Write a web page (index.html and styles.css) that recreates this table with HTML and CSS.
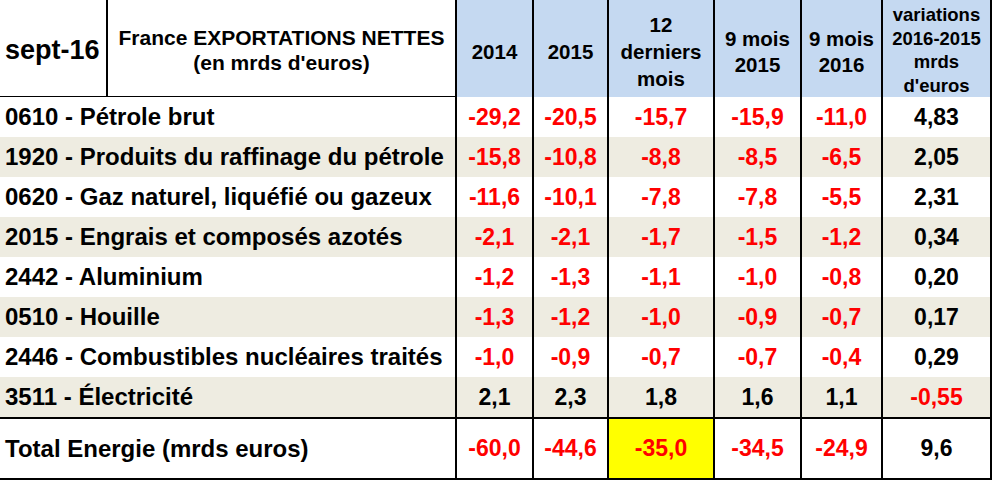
FILE: index.html
```html
<!DOCTYPE html>
<html lang="fr">
<head>
<meta charset="utf-8">
<title>France exportations nettes – énergie</title>
<link rel="stylesheet" href="styles.css">
</head>
<body>
<div class="sheet">
  <div class="row head">
    <div class="cell date">sept-16</div>
    <div class="cell title">France EXPORTATIONS NETTES<br>(en mrds d'euros)</div>
    <div class="cell hnum">2014</div>
    <div class="cell hnum">2015</div>
    <div class="cell hnum h12">12<br>derniers<br>mois</div>
    <div class="cell hnum h9">9 mois<br>2015</div>
    <div class="cell hnum h9">9 mois<br>2016</div>
    <div class="cell hnum hvar">variations<br>2016-2015<br>mrds<br>d'euros</div>
  </div>

  <div class="row">
    <div class="cell label">0610 - Pétrole brut</div>
    <div class="cell num neg">-29,2</div><div class="cell num neg">-20,5</div><div class="cell num neg">-15,7</div><div class="cell num neg">-15,9</div><div class="cell num neg">-11,0</div><div class="cell num var">4,83</div>
  </div>
  <div class="row alt">
    <div class="cell label">1920 - Produits du raffinage du pétrole</div>
    <div class="cell num neg">-15,8</div><div class="cell num neg">-10,8</div><div class="cell num neg">-8,8</div><div class="cell num neg">-8,5</div><div class="cell num neg">-6,5</div><div class="cell num var">2,05</div>
  </div>
  <div class="row">
    <div class="cell label">0620 - Gaz naturel, liquéfié ou gazeux</div>
    <div class="cell num neg">-11,6</div><div class="cell num neg">-10,1</div><div class="cell num neg">-7,8</div><div class="cell num neg">-7,8</div><div class="cell num neg">-5,5</div><div class="cell num var">2,31</div>
  </div>
  <div class="row alt">
    <div class="cell label">2015 - Engrais et composés azotés</div>
    <div class="cell num neg">-2,1</div><div class="cell num neg">-2,1</div><div class="cell num neg">-1,7</div><div class="cell num neg">-1,5</div><div class="cell num neg">-1,2</div><div class="cell num var">0,34</div>
  </div>
  <div class="row">
    <div class="cell label">2442 - Aluminium</div>
    <div class="cell num neg">-1,2</div><div class="cell num neg">-1,3</div><div class="cell num neg">-1,1</div><div class="cell num neg">-1,0</div><div class="cell num neg">-0,8</div><div class="cell num var">0,20</div>
  </div>
  <div class="row alt">
    <div class="cell label">0510 - Houille</div>
    <div class="cell num neg">-1,3</div><div class="cell num neg">-1,2</div><div class="cell num neg">-1,0</div><div class="cell num neg">-0,9</div><div class="cell num neg">-0,7</div><div class="cell num var">0,17</div>
  </div>
  <div class="row">
    <div class="cell label">2446 - Combustibles nucléaires traités</div>
    <div class="cell num neg">-1,0</div><div class="cell num neg">-0,9</div><div class="cell num neg">-0,7</div><div class="cell num neg">-0,7</div><div class="cell num neg">-0,4</div><div class="cell num var">0,29</div>
  </div>
  <div class="row alt">
    <div class="cell label">3511 - Électricité</div>
    <div class="cell num">2,1</div><div class="cell num">2,3</div><div class="cell num">1,8</div><div class="cell num">1,6</div><div class="cell num">1,1</div><div class="cell num var neg">-0,55</div>
  </div>

  <div class="row total">
    <div class="cell label">Total Energie (mrds euros)</div>
    <div class="cell num neg">-60,0</div><div class="cell num neg">-44,6</div><div class="cell num neg hilite">-35,0</div><div class="cell num neg">-34,5</div><div class="cell num neg">-24,9</div><div class="cell num var">9,6</div>
  </div>
</div>
</body>
</html>
```

FILE: styles.css
```css
* {
  box-sizing: border-box;
}

html, body {
  margin: 0;
  padding: 0;
  background: #ffffff;
}

body {
  font-family: "Liberation Sans", Arial, sans-serif;
  font-weight: bold;
  color: #000000;
}

.sheet {
  width: 992px;
  display: flex;
  flex-direction: column;
}

.row {
  display: grid;
  grid-template-columns: 106px 349px 77px 75px 106px 87px 81px 111px;
  height: 40px;
  background: #ffffff;
}

.row.alt {
  background: #eeece1;
}

.cell {
  display: flex;
  align-items: center;
  justify-content: center;
  border-left: 2px solid #000;
  text-align: center;
  white-space: nowrap;
}

.cell.var {
  border-right: 2px solid #000;
}

/* header */
.row.head {
  height: 97px;
  border-bottom: 1px solid #000;
}

.head .date {
  border-left: none;
  justify-content: flex-start;
  padding: 4px 0 0 5px;
  font-size: 27px;
}

.head .title {
  font-size: 21px;
  line-height: 25px;
  padding-top: 2px;
}

.head .hnum {
  background: #c5d9f1;
  font-size: 20.5px;
  line-height: 25px;
  padding-top: 6px;
}

.head .h12 {
  line-height: 27px;
}

.head .h9 {
  line-height: 25.5px;
}

.head .hvar {
  font-size: 18.5px;
  line-height: 23.5px;
  padding-top: 3px;
  border-right: 2px solid #000;
}

/* body */
.label {
  grid-column: span 2;
  border-left: none;
  justify-content: flex-start;
  padding-left: 5px;
  font-size: 24px;
  line-height: 40px;
}

.num {
  font-size: 23px;
  line-height: 40px;
}

.neg {
  color: #ff0000;
}

/* total */
.row.total {
  height: 63px;
  border-top: 2px solid #000;
  border-bottom: 2px solid #000;
}

.total .label,
.total .num {
  line-height: 59px;
}

.hilite {
  background: #ffff00;
}
```
